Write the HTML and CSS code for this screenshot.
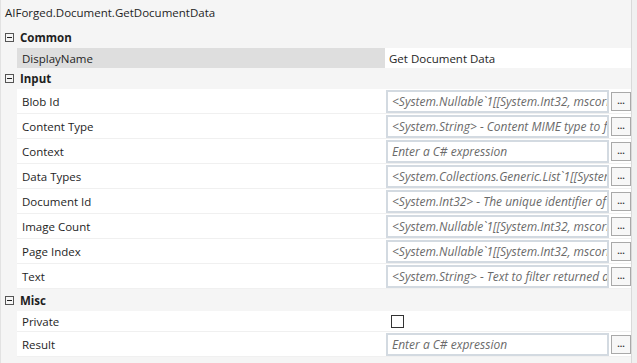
FILE: index.html
```html
<!DOCTYPE html>
<html lang="en">
<head>
  <meta charset="UTF-8" />
  <title>Properties</title>
  <link rel="stylesheet" href="styles.css">
</head>
<body>
  <div class="grid">
    <div class="title">AIForged.Document.GetDocumentData</div>

    <div class="cat"><span class="toggle"></span>Common</div>
    <div class="row sel short">
      <div class="label">DisplayName</div>
      <div class="value"><span class="plain">Get Document Data</span></div>
    </div>

    <div class="cat"><span class="toggle"></span>Input</div>
    <div class="row">
      <div class="label">Blob Id</div>
      <div class="value"><div class="box">&lt;System.Nullable`1[[System.Int32, mscorlib]]&gt; - The blob id</div><button class="more">...</button></div>
    </div>
    <div class="row">
      <div class="label">Content Type</div>
      <div class="value"><div class="box">&lt;System.String&gt; - Content MIME type to filter</div><button class="more">...</button></div>
    </div>
    <div class="row">
      <div class="label">Context</div>
      <div class="value"><div class="box">Enter a C# expression</div><button class="more">...</button></div>
    </div>
    <div class="row">
      <div class="label">Data Types</div>
      <div class="value"><div class="box">&lt;System.Collections.Generic.List`1[[System.String]]&gt;</div><button class="more">...</button></div>
    </div>
    <div class="row">
      <div class="label">Document Id</div>
      <div class="value"><div class="box">&lt;System.Int32&gt; - The unique identifier of the document</div><button class="more">...</button></div>
    </div>
    <div class="row">
      <div class="label">Image Count</div>
      <div class="value"><div class="box">&lt;System.Nullable`1[[System.Int32, mscorlib]]&gt; - Image count</div><button class="more">...</button></div>
    </div>
    <div class="row">
      <div class="label">Page Index</div>
      <div class="value"><div class="box">&lt;System.Nullable`1[[System.Int32, mscorlib]]&gt; - Page index</div><button class="more">...</button></div>
    </div>
    <div class="row">
      <div class="label">Text</div>
      <div class="value"><div class="box">&lt;System.String&gt; - Text to filter returned data</div><button class="more">...</button></div>
    </div>

    <div class="cat misc"><span class="toggle"></span>Misc</div>
    <div class="row check">
      <div class="label">Private</div>
      <div class="value"><span class="checkbox"></span></div>
    </div>
    <div class="row">
      <div class="label">Result</div>
      <div class="value"><div class="box">Enter a C# expression</div><button class="more">...</button></div>
    </div>
  </div>
</body>
</html>
```

FILE: styles.css
```css
body {
  margin: 0;
  background: #f0f0f0;
  font-family: "Open Sans", "Noto Sans", sans-serif;
  font-size: 11.5px;
  color: #1e1e1e;
}
.grid {
  width: 632px;
  height: 363px;
  background: #f5f5f5;
  border-left: 1px solid #e2e2e2;
  border-right: 1px solid #d9d9d9;
  box-sizing: border-box;
}
.title {
  height: 27px;
  line-height: 25px;
  padding-left: 4px;
}
.cat {
  height: 21px;
  display: flex;
  align-items: center;
  font-weight: bold;
  padding-left: 4px;
}
.cat.misc { height: 22px; }
.toggle {
  width: 9px;
  height: 9px;
  border: 1px solid #555;
  box-sizing: border-box;
  margin-right: 6px;
  position: relative;
}
.toggle::after {
  content: "";
  position: absolute;
  left: 1px;
  right: 1px;
  top: 3px;
  height: 1px;
  background: #222;
}
.row {
  display: flex;
  height: 25px;
  margin-left: 16px;
  background: #fff;
  border-bottom: 1px solid #f0f0f0;
  box-sizing: border-box;
}
.row.short { height: 20px; border-bottom: none; }
.row.check { height: 21px; }
.label {
  width: 368px;
  padding-left: 5px;
  padding-top: 1px;
  display: flex;
  align-items: center;
  box-sizing: border-box;
}
.sel .label { background: #dedede; }
.value {
  flex: 1;
  display: flex;
  align-items: center;
  min-width: 0;
}
.plain { padding-left: 4px; }
.box {
  width: 224px;
  height: 23px;
  margin-left: 1px;
  border: 2px solid #d3dae1;
  box-sizing: border-box;
  padding-left: 4px;
  font-size: 12px;
  line-height: 19px;
  font-style: italic;
  color: #6a6a6a;
  white-space: nowrap;
  overflow: hidden;
}
.more {
  width: 20px;
  height: 19px;
  margin-left: 2px;
  padding: 0;
  border: 1px solid #a9a9a9;
  background: #f7f7f7;
  font-family: "Open Sans", sans-serif;
  font-size: 9px;
  font-weight: bold;
  line-height: 19px;
  color: #333;
  display: flex;
  align-items: flex-end;
  justify-content: center;
}
.checkbox {
  width: 13px;
  height: 13px;
  margin-left: 6px;
  border: 1px solid #333;
  box-sizing: border-box;
  background: #fff;
}
```
